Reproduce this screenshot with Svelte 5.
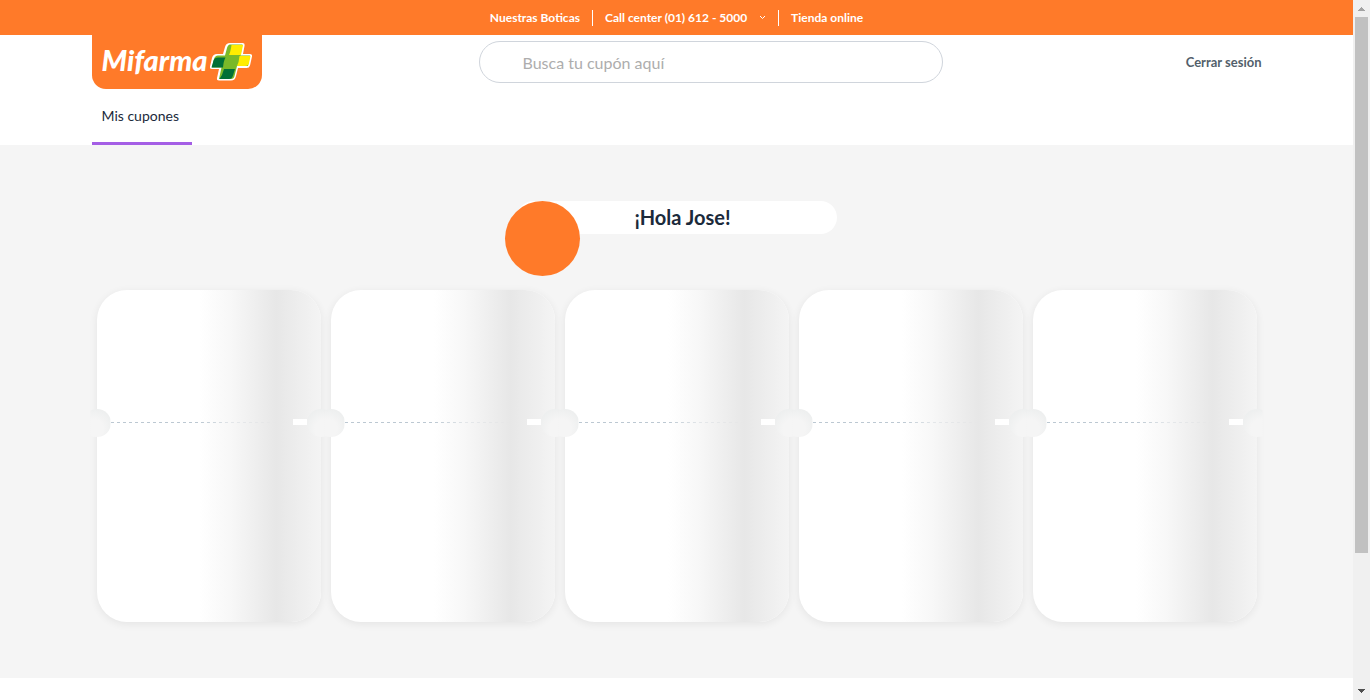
<script>
  const coupons = [1, 2, 3, 4, 5];
  let query = $state('');
</script>

<div class="shell">
  <div class="page">
    <nav class="topbar" aria-label="Enlaces">
      <a href="#boticas">Nuestras Boticas</a>
      <button type="button" class="call">
        Call center (01) 612 - 5000
        <svg width="7" height="5" viewBox="0 0 7 5" aria-hidden="true">
          <path d="M1 1l2.500 2.500L6 1" fill="none" stroke="currentColor" />
        </svg>
      </button>
      <a href="#tienda">Tienda online</a>
    </nav>

    <header class="container">
      <div class="head">
        <a class="logo" href="#inicio">
          <span class="word">Mifarma</span>
          <svg width="44" height="40" viewBox="0 0 44 40" aria-hidden="true">
            <path
              d="M21 1H34Q36 1 35.600 3.500L34 12H41Q43.500 12 43 14.500L41 23.500Q40.300 26 37.500 26H29L27 34Q26 38.500 22 38.500H10Q7.500 38.500 8 36L10 27H3Q.5 27 1 24.500L3 16Q4 12 8 12H14L16 5Q17 1 21 1Z"
              fill="#fff"
            />
            <path d="M21 2.500H33.500L31.500 13.500H41L39 24H28L25.500 34Q25 37 22 37H10L12.500 25.500H3L5 17Q6 13.500 9 13.500H16L18 6Q19 2.500 21 2.500Z" fill="#7ab929" />
            <path d="M22.500 3H34L32 13H20Q21.500 10 22.500 3Z" fill="#ffed00" />
            <path d="M30.500 14H41.500L40 21Q39.500 24 36 24H28Q30 20 30.500 14Z" fill="#ffed00" />
            <path d="M9 15.500H16.500Q14.500 19 14 25.500H2.500L4.500 18.500Q5.500 15.500 9 15.500Z" fill="#007037" />
            <path d="M15 27H26L24 33.500Q23 37 20 37H10.500Q13.500 33 15 27Z" fill="#007037" />
          </svg>
        </a>
        <input
          class="search"
          type="search"
          aria-label="Busca tu cupón aquí"
          placeholder="Busca tu cupón aquí"
          bind:value={query}
        />
        <button type="button" class="logout">Cerrar sesión</button>
      </div>
      <nav class="tabs" aria-label="Secciones">
        <a class="tab" href="#cupones" aria-current="page">Mis cupones</a>
      </nav>
    </header>

    <main>
      <div class="container">
        <div class="greeting">
          <span class="avatar"></span>
          <h1>¡Hola Jose!</h1>
        </div>
        <div class="coupons">
          {#each coupons as id (id)}
            <article class="coupon" aria-busy="true">
              <div class="cut"></div>
              <div class="shine"></div>
              <span class="tick"></span>
              <span class="notch left"></span>
              <span class="notch right"></span>
            </article>
          {/each}
        </div>
      </div>
    </main>
  </div>

  <div class="scrollbar" aria-hidden="true">
    <svg width="17" height="17" viewBox="0 0 17 17" shape-rendering="crispEdges">
      <path d="M5 11L8.500 7L12 11Z" fill="#a3a3a3" />
    </svg>
    <div class="track"><div class="thumb"></div></div>
    <svg width="17" height="17" viewBox="0 0 17 17" shape-rendering="crispEdges">
      <path d="M5 6H12L8.500 10Z" fill="#505050" />
    </svg>
  </div>
</div>

<style>
  :global(body) {
    margin: 0;
    background: #fff;
  }

  .shell {
    display: grid;
    grid-template-columns: minmax(0, 1fr) 17px;
    min-height: 100vh;
    font-family: Lato, 'Liberation Sans', sans-serif;
    color: #1b2a3b;
  }

  .shell * {
    box-sizing: border-box;
  }

  a {
    color: inherit;
    text-decoration: none;
  }

  button {
    padding: 0;
    border: 0;
    background: none;
    color: inherit;
    font: inherit;
    cursor: pointer;
  }

  .container {
    width: 100%;
    max-width: 1170px;
    margin: 0 auto;
  }

  .topbar {
    display: flex;
    align-items: center;
    justify-content: center;
    height: 35px;
    background: #ff7a29;
    color: #fff;
    font-size: 12px;
    font-weight: 700;
    line-height: 16px;
  }

  .call {
    display: flex;
    align-items: center;
    gap: 12px;
    margin: 0 12px;
    padding: 0 12px;
    border: solid #fff;
    border-width: 0 1px;
  }

  .head {
    display: grid;
    grid-template-columns: 387px minmax(0, 464px) 1fr;
    align-items: center;
    height: 54px;
  }

  .logo {
    display: flex;
    align-items: center;
    gap: 1px;
    width: 170px;
    height: 54px;
    padding: 0 9px 0 10px;
    border-radius: 0 0 14px 14px;
    background: #ff7a29;
    color: #fff;
  }

  .word {
    width: 106px;
    padding-bottom: 4px;
    font-size: 29px;
    font-style: italic;
    font-weight: 900;
    line-height: 32px;
  }

  .logo svg {
    flex: none;
  }

  .search {
    width: 100%;
    height: 42px;
    padding: 0 43px;
    border: 1px solid #d0d5dc;
    border-radius: 21px;
    outline: 0;
    background: #fff;
    color: #1b2a3b;
    font: 16px Lato, 'Liberation Sans', sans-serif;
    appearance: none;
  }

  .search::placeholder {
    color: #adadad;
    opacity: 1;
  }

  .logout {
    justify-self: end;
    color: #535f6b;
    font-size: 13px;
    font-weight: 700;
    line-height: 16px;
  }

  .tabs {
    display: flex;
    height: 56px;
  }

  .tab {
    width: 100px;
    padding: 17px 10px;
    border-bottom: 3px solid #a45ee5;
    font-size: 14px;
    line-height: 20px;
  }

  main {
    padding: 56px 0;
    background: #f5f5f5;
  }

  .greeting {
    position: relative;
    width: 320px;
    height: 33px;
    margin: 0 auto 56px;
    border-radius: 17px;
    background: #fff;
  }

  .greeting h1 {
    margin: 0;
    padding-left: 12px;
    font-size: 20px;
    font-weight: 700;
    line-height: 33px;
    text-align: center;
  }

  .avatar {
    position: absolute;
    top: 0;
    left: -12px;
    width: 75px;
    height: 75px;
    border-radius: 50%;
    background: #ff7a29;
  }

  .coupons {
    display: grid;
    grid-template-columns: repeat(5, 1fr);
    gap: 10px;
    padding: 0 5px;
  }

  .coupon {
    position: relative;
    height: 332px;
    border-radius: 30px;
    background: #fff;
    box-shadow: 0 2px 8px rgba(0, 0, 0, 0.07);
  }

  .cut {
    position: absolute;
    top: 132px;
    left: 14px;
    right: 14px;
    height: 1px;
    background: repeating-linear-gradient(90deg, #bcc8d2 0 3px, transparent 3px 6px);
  }

  .shine {
    position: absolute;
    inset: 0;
    border-radius: 30px;
    background: linear-gradient(
      90deg,
      rgba(255, 255, 255, 0) 46%,
      rgba(244, 244, 244, 0.7) 60%,
      #e7e7e7 80%,
      #f4f4f4 100%
    );
  }

  .tick {
    position: absolute;
    top: 129px;
    right: 14px;
    width: 14px;
    height: 6px;
    background: #fff;
  }

  .notch {
    position: absolute;
    top: 119px;
    width: 28px;
    height: 28px;
    border-radius: 50%;
  }

  .left {
    left: -14px;
    background: radial-gradient(circle at 10px 20px, #f5f5f5 10px, #ebeded 24px);
    clip-path: inset(0 0 0 8px);
  }

  .right {
    right: -14px;
    background: radial-gradient(circle at 18px 20px, #f5f5f5 10px, #ebeded 24px);
    clip-path: inset(0 8px 0 0);
  }

  .scrollbar {
    display: flex;
    flex-direction: column;
    background: #f0f0f0;
  }

  .scrollbar svg {
    flex: none;
  }

  .track {
    flex: 1;
    padding: 0 2px;
  }

  .thumb {
    height: 80.500%;
    background: #c1c1c1;
  }
</style>
